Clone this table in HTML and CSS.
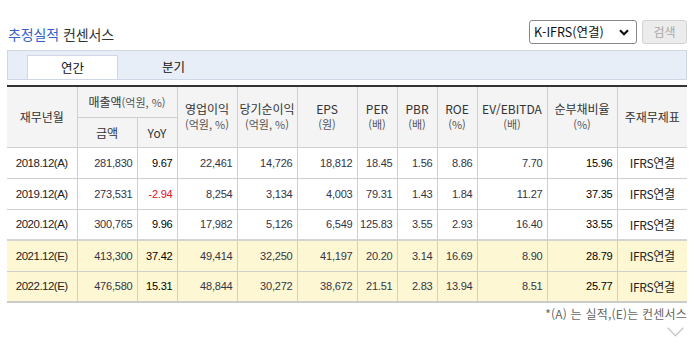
FILE: index.html
```html
<!DOCTYPE html>
<html lang="ko">
<head>
<meta charset="utf-8">
<title>추정실적 컨센서스</title>
<link rel="stylesheet" href="styles.css">
</head>
<body>
<div class="wrap">
  <div class="top">
    <h2 class="title"><span class="blue">추정실적</span> 컨센서스</h2>
    <div class="controls">
      <div class="select">K-IFRS(연결)
        <svg class="caret" width="10" height="7" viewBox="0 0 10 7"><path d="M1 1.2 L5 5.2 L9 1.2" fill="none" stroke="#111" stroke-width="2.2"/></svg>
      </div>
      <button class="btn">검색</button>
    </div>
  </div>
  <div class="tabs">
    <div class="tab active">연간</div>
    <div class="tab">분기</div>
  </div>
  <table class="grid">
    <colgroup>
      <col class="w70"><col class="w60"><col class="w40"><col class="w60"><col class="w60"><col class="w60">
      <col class="w40"><col class="w40"><col class="w40"><col class="w70"><col class="w70"><col class="w70">
    </colgroup>
    <thead>
      <tr class="h1">
        <th rowspan="2">재무년월</th>
        <th colspan="2">매출액<span class="sub-in">(억원, %)</span></th>
        <th rowspan="2"><span class="ln">영업이익</span><span class="sub">(억원, %)</span></th>
        <th rowspan="2"><span class="ln">당기순이익</span><span class="sub">(억원, %)</span></th>
        <th rowspan="2"><span class="ln">EPS</span><span class="sub">(원)</span></th>
        <th rowspan="2"><span class="ln">PER</span><span class="sub">(배)</span></th>
        <th rowspan="2"><span class="ln">PBR</span><span class="sub">(배)</span></th>
        <th rowspan="2"><span class="ln">ROE</span><span class="sub">(%)</span></th>
        <th rowspan="2"><span class="ln">EV/EBITDA</span><span class="sub">(배)</span></th>
        <th rowspan="2"><span class="ln">순부채비율</span><span class="sub">(%)</span></th>
        <th rowspan="2">주재무제표</th>
      </tr>
      <tr class="h2">
        <th>금액</th>
        <th>YoY</th>
      </tr>
    </thead>
    <tbody>
      <tr>
        <td class="date">2018.12(A)</td><td>281,830</td><td class="dk">9.67</td><td>22,461</td><td>14,726</td><td>18,812</td><td>18.45</td><td>1.56</td><td>8.86</td><td>7.70</td><td class="dk">15.96</td><td class="ifrs">IFRS연결</td>
      </tr>
      <tr>
        <td class="date">2019.12(A)</td><td>273,531</td><td class="neg">-2.94</td><td>8,254</td><td>3,134</td><td>4,003</td><td>79.31</td><td>1.43</td><td>1.84</td><td>11.27</td><td class="dk">37.35</td><td class="ifrs">IFRS연결</td>
      </tr>
      <tr>
        <td class="date">2020.12(A)</td><td>300,765</td><td class="dk">9.96</td><td>17,982</td><td>5,126</td><td>6,549</td><td>125.83</td><td>3.55</td><td>2.93</td><td>16.40</td><td class="dk">33.55</td><td class="ifrs">IFRS연결</td>
      </tr>
      <tr class="est first-est">
        <td class="date">2021.12(E)</td><td>413,300</td><td class="dk">37.42</td><td>49,414</td><td>32,250</td><td>41,197</td><td>20.20</td><td>3.14</td><td>16.69</td><td>8.90</td><td class="dk">28.79</td><td class="ifrs">IFRS연결</td>
      </tr>
      <tr class="est last">
        <td class="date">2022.12(E)</td><td>476,580</td><td class="dk">15.31</td><td>48,844</td><td>30,272</td><td>38,672</td><td>21.51</td><td>2.83</td><td>13.94</td><td>8.51</td><td class="dk">25.77</td><td class="ifrs">IFRS연결</td>
      </tr>
    </tbody>
  </table>
  <p class="note">*(A) 는 실적,(E)는 컨센서스</p>
  <div class="more">
    <svg width="17" height="10" viewBox="0 0 17 10"><path d="M0.7 0.7 L8.5 8.8 L16.3 0.7" fill="none" stroke="#c8c8c8" stroke-width="1.3"/></svg>
  </div>
</div>
</body>
</html>
```
FILE: styles.css
```css
* { box-sizing: border-box; }
html, body { margin: 0; padding: 0; background: #fff; }
body {
  font-family: "Noto Sans CJK KR", "Liberation Sans", sans-serif;
  color: #333;
}
.wrap { width: 687px; padding-left: 7px; }

.top {
  display: flex;
  justify-content: space-between;
  align-items: flex-start;
  padding-top: 20px;
  height: 50px;
}
.title {
  margin: 5px 0 0 1px;
  font-size: 14px;
  font-weight: normal;
  line-height: 18px;
  color: #333;
  letter-spacing: -0.1px;
}
.title .blue { color: #3560c8; }
.controls { display: flex; gap: 5px; }
.select {
  width: 108px;
  height: 24px;
  border: 1px solid #8a8a8a;
  border-radius: 3px;
  font-size: 12.5px;
  line-height: 22px;
  padding-left: 4px;
  color: #111;
  position: relative;
  background: #fff;
}
.caret { position: absolute; right: 7px; top: 8px; }
.btn {
  width: 45px;
  height: 24px;
  border: 1px solid #d2d2d2;
  border-radius: 3px;
  background: #ececec;
  color: #a8a8a8;
  font-family: "Noto Sans CJK KR", sans-serif;
  font-size: 12px;
  padding: 0;
  line-height: 22px;
}

.tabs {
  display: flex;
  height: 30px;
  border: 1px solid #cfd7e6;
  background: #e8eef8;
  padding-left: 19px;
  align-items: flex-end;
}
.tab {
  width: 91px;
  height: 24px;
  text-align: center;
  font-size: 12.5px;
  line-height: 23px;
  color: #111;
}
.tab + .tab { width: 111px; }
.tab.active {
  background: #fff;
  border: 1px solid #cfd7e6;
  border-bottom: none;
}

.grid {
  margin-top: 5px;
  width: 680px;
  table-layout: fixed;
  border-collapse: collapse;
  font-size: 11px;
}
.w70 { width: 70px; }
.w60 { width: 60px; }
.w40 { width: 40px; }
.grid thead tr.h1 th { border-top: 2px solid #333; }
.grid th {
  background: #f4f4f4;
  font-weight: normal;
  font-size: 12px;
  color: #333;
  border: 1px solid #cfcfcf;
  line-height: 15px;
  padding: 0;
  text-align: center;
}
.grid tr.h1 { height: 31px; }
.grid tr.h2 { height: 30px; }
.grid th .ln { display: block; line-height: 16px; }
.grid th .sub { display: block; font-size: 11px; line-height: 15px; color: #555; }
.grid th .sub-in { font-size: 11px; color: #555; }
.grid th:first-child { border-left: none; }
.grid th:last-child { border-right: none; }
.grid td {
  border: 1px solid #cfcfcf;
  height: 31px;
  padding: 0 4px 0 0;
  text-align: right;
  font-family: "Liberation Sans", sans-serif;
  letter-spacing: -0.2px;
  color: #343448;
}
.grid td:first-child { border-left: none; }
.grid td:last-child { border-right: none; }
.grid td.date {
  text-align: center;
  padding: 0;
  font-size: 11.5px;
  letter-spacing: -0.5px;
  color: #222;
}
.grid td.ifrs {
  text-align: center;
  padding: 0;
  font-family: "Noto Sans CJK KR", "Liberation Sans", sans-serif;
  font-size: 12px;
  letter-spacing: -0.3px;
  color: #222;
}
.grid td.dk { color: #000; }
.grid td.neg { color: #e0102c; }
.grid tr.est td { background: #fdf8d3; }
.grid tr.first-est td { border-top: 2px solid #d4d4d4; }
.grid tr.last td { border-bottom: 2px solid #cbcbcb; }

.note {
  margin: 4px 0 0;
  text-align: right;
  font-size: 12px;
  line-height: 14px;
  color: #666;
  letter-spacing: 0.2px;
}
.more { display: flex; justify-content: flex-end; padding: 6px 3px 0 0; }
.more svg { display: block; }
```
